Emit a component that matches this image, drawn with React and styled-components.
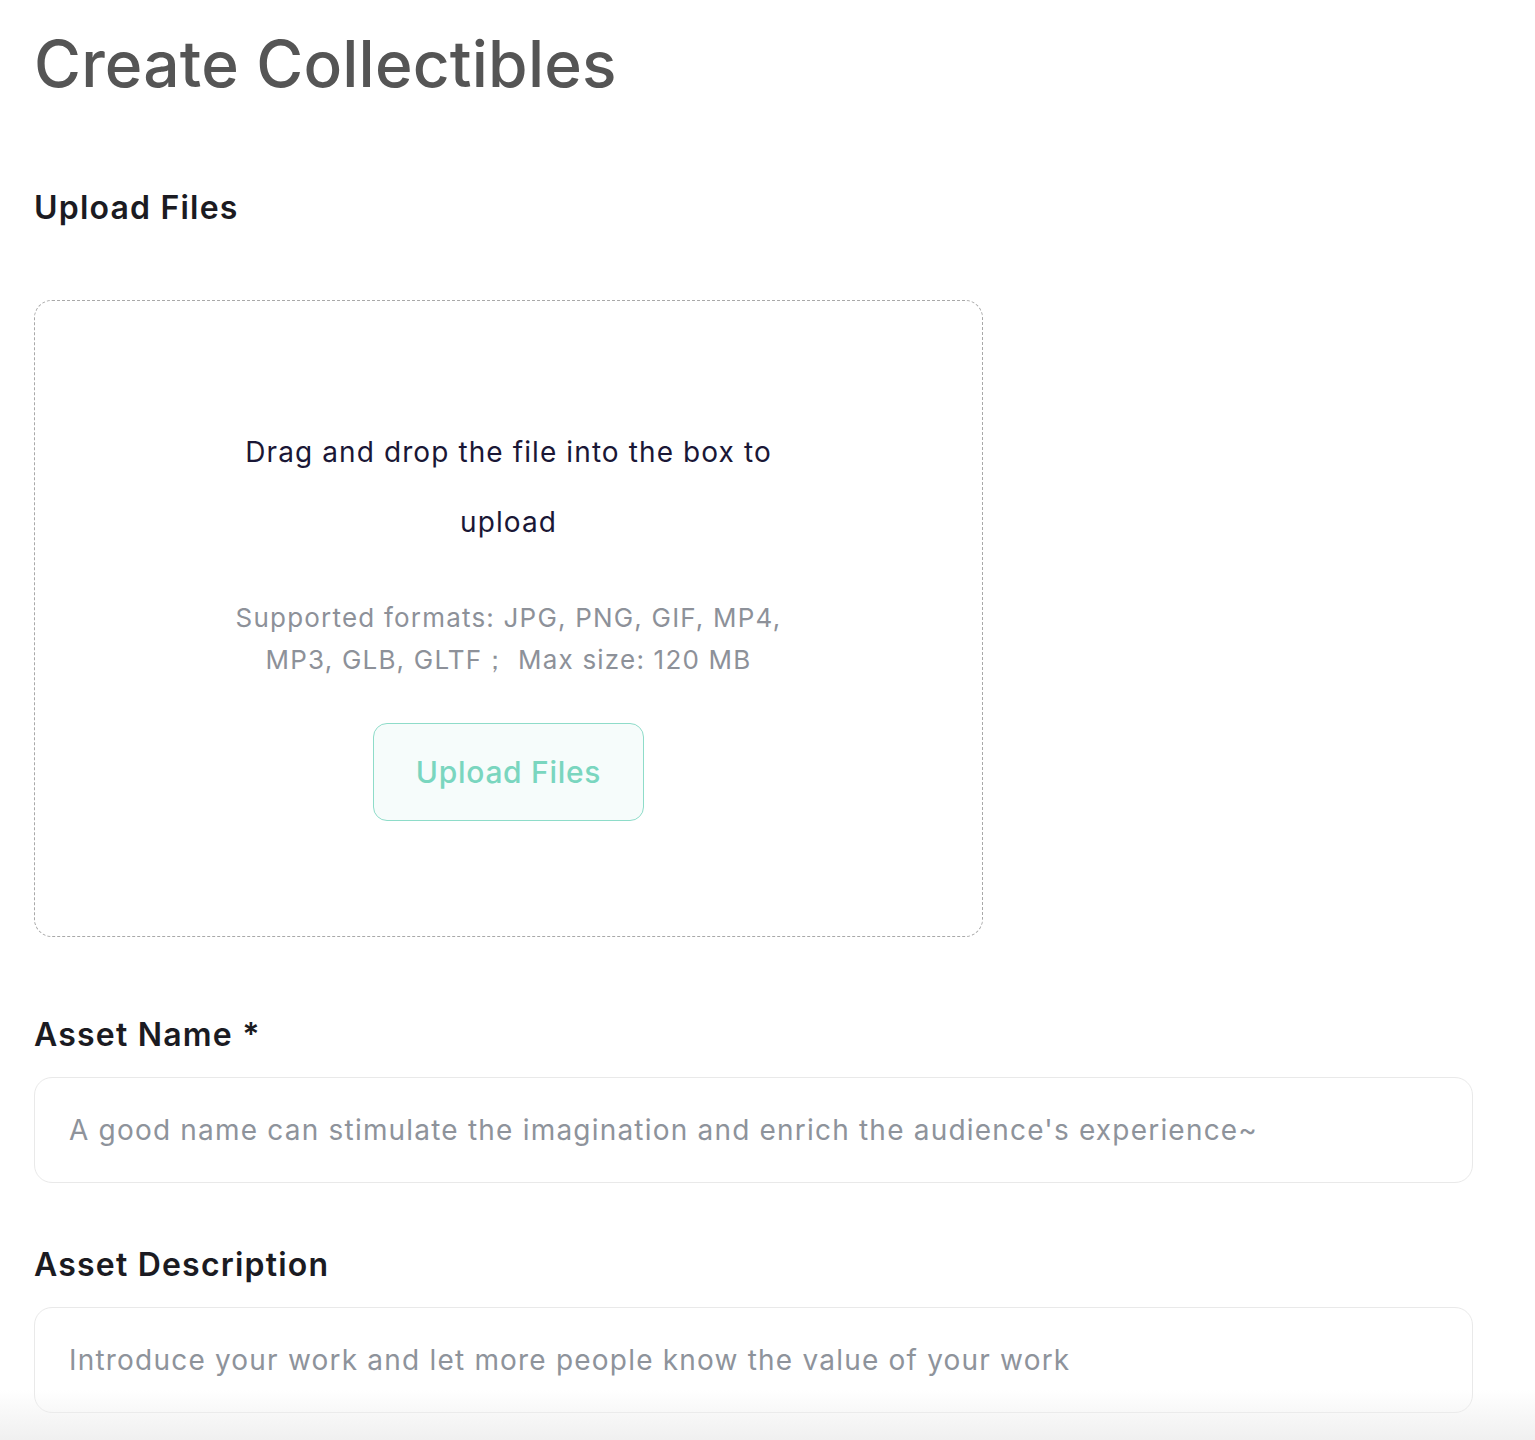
import React from "react";
import styled, { createGlobalStyle } from "styled-components";

const Global = createGlobalStyle`
  html, body { margin: 0; padding: 0; background: #fff; }
  body { font-family: "Inter", "Noto Sans", sans-serif; }
  * { box-sizing: border-box; }
`;

const Page = styled.main`
  width: 1535px;
  min-height: 1440px;
  padding: 22px 62px 0 34px;
  display: flex;
  flex-direction: column;
  position: relative;
  overflow: hidden;
`;

const Title = styled.h1`
  margin: 0;
  font-size: 64px;
  line-height: 84px;
  font-weight: 500;
  color: #555555;
  letter-spacing: 0.2px;
`;

const Section = styled.section`
  display: flex;
  flex-direction: column;
  margin-top: ${(p) => p.$top || 0}px;
`;

const Label = styled.h2`
  margin: 0;
  font-size: 32px;
  line-height: 40px;
  font-weight: 600;
  color: #1b1b22;
  letter-spacing: 1.2px;
`;

const DropZone = styled.div`
  margin-top: 72px;
  width: 949px;
  height: 637px;
  border: 1.5px dashed #a9a9a9;
  border-radius: 18px;
  display: flex;
  flex-direction: column;
  align-items: center;
  justify-content: center;
  text-align: center;
`;

const DropText = styled.p`
  margin: 0;
  width: 600px;
  font-size: 28px;
  line-height: 70px;
  color: #1a1736;
  font-weight: 400;
  letter-spacing: 1.1px;
`;

const Formats = styled.p`
  margin: 40px 0 0;
  width: 565px;
  font-size: 26px;
  line-height: 42px;
  color: #8d9199;
  letter-spacing: 1.2px;
`;

const UploadButton = styled.button`
  margin-top: 42px;
  width: 271px;
  height: 98px;
  border: 1.5px solid #8edcc9;
  background: #f6fcfb;
  border-radius: 14px;
  color: #7ad6bf;
  font-family: inherit;
  font-size: 30px;
  font-weight: 500;
  letter-spacing: 0.7px;
  cursor: pointer;
`;

const Field = styled.div`
  margin-top: 22px;
  width: 1439px;
  height: 106px;
  border: 1.5px solid #e9e9e9;
  border-radius: 18px;
  display: flex;
  align-items: center;
  padding: 0 32px;
`;

const Input = styled.input`
  border: none;
  outline: none;
  width: 100%;
  background: transparent;
  font-family: inherit;
  font-size: 28px;
  letter-spacing: 1.2px;
  color: #1b1b22;
  &::placeholder { color: #8e939b; }
`;

const Fade = styled.div`
  position: absolute;
  left: 0;
  right: 0;
  bottom: 0;
  height: 50px;
  background: linear-gradient(to bottom, rgba(240,240,240,0), rgba(238,238,238,0.9));
  pointer-events: none;
`;

export default function App() {
  return (
    <>
      <Global />
      <Page>
        <Title>Create Collectibles</Title>
        <Section $top={82}>
          <Label>Upload Files</Label>
          <DropZone>
            <DropText>Drag and drop the file into the box to upload</DropText>
            <Formats>Supported formats: JPG, PNG, GIF, MP4, MP3, GLB, GLTF；&nbsp;Max size: 120 MB</Formats>
            <UploadButton>Upload Files</UploadButton>
          </DropZone>
        </Section>
        <Section $top={78}>
          <Label>Asset Name *</Label>
          <Field>
            <Input placeholder="A good name can stimulate the imagination and enrich the audience's experience~" />
          </Field>
        </Section>
        <Section $top={62}>
          <Label>Asset Description</Label>
          <Field>
            <Input placeholder="Introduce your work and let more people know the value of your work" />
          </Field>
        </Section>
        <Fade />
      </Page>
    </>
  );
}
